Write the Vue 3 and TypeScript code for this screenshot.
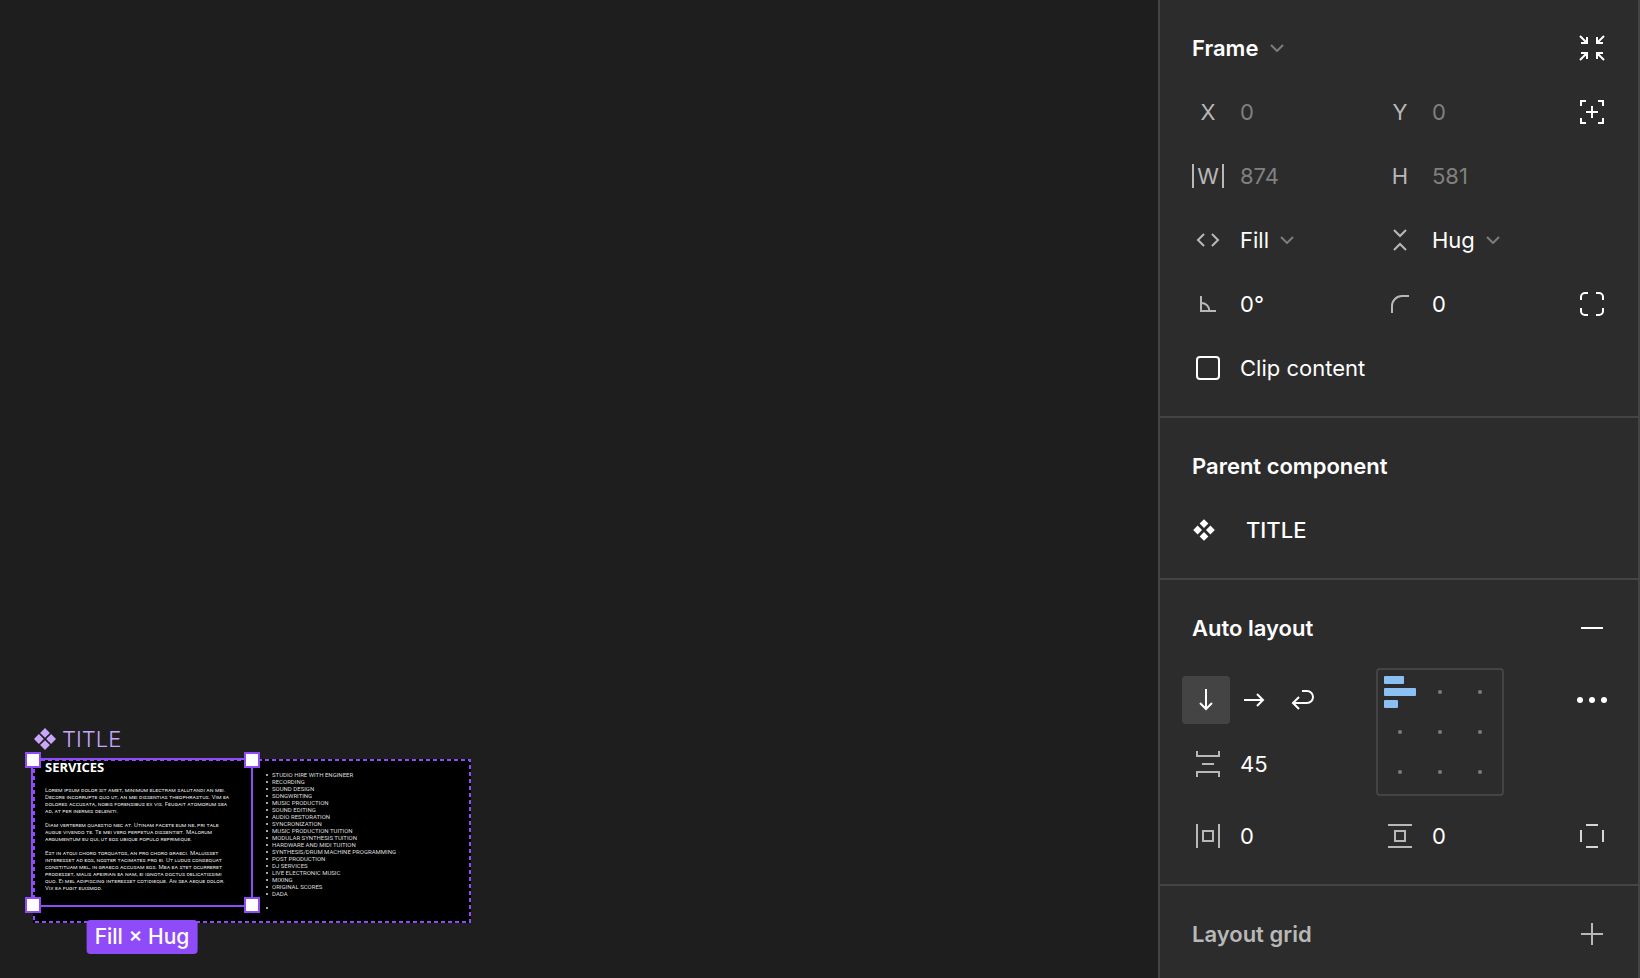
<script setup lang="ts">
import { ref } from 'vue'

type Line = string

const x = ref('0')
const y = ref('0')
const w = ref('874')
const h = ref('581')
const rotation = ref('0°')
const radius = ref('0')
const gap = ref('45')
const padX = ref('0')
const padY = ref('0')
const clip = ref(false)
const direction = ref<'down' | 'right' | 'wrap'>('down')
const alignment = ref(0)

const paragraphs: Line[][] = [
  [
    'Lorem ipsum dolor sit amet, minimum electram salutandi an mei.',
    'Decore incorrupte quo ut, an mei dissentias theophrastus. Vim ea',
    'dolores accusata, nobis forensibus ex vis. Feugait atomorum sea',
    'ad, at per inermis deleniti.',
  ],
  [
    'Diam verterem quaestio nec at. Utinam facete eum ne, pri tale',
    'augue vivendo te. Te mei vero perpetua dissentiet. Malorum',
    'argumentum eu qui, ut eos ubique populo reprimique.',
  ],
  [
    'Est in atqui choro torquatos, an pro choro graeci. Maluisset',
    'interesset ad eos, noster tacimates pro ei. Ut ludus consequat',
    'constituam mel, in graeco accusam eos. Mea ea stet ocurreret',
    'prodesset, malis apeirian ea nam, ei ignota doctus delicatissimi',
    'quo. Ei mel adipiscing interesset cotidieque. An sea aeque dolor.',
    'Vix ea fugit euismod.',
  ],
]

const services: string[] = [
  'STUDIO HIRE WITH ENGINEER',
  'RECORDING',
  'SOUND DESIGN',
  'SONGWRITING',
  'MUSIC PRODUCTION',
  'SOUND EDITING',
  'AUDIO RESTORATION',
  'SYNCRONIZATION',
  'MUSIC PRODUCTION TUITION',
  'MODULAR SYNTHESIS TUITION',
  'HARDWARE AND MIDI TUITION',
  'SYNTHESIS/DRUM MACHINE PROGRAMMING',
  'POST PRODUCTION',
  'DJ SERVICES',
  'LIVE ELECTRONIC MUSIC',
  'MIXING',
  'ORIGINAL SCORES',
  'DADA',
]
</script>

<template>
  <div class="editor">
    <main class="canvas">
      <div class="node">
        <div class="node-label">
          <svg class="diamond" viewBox="0 0 24 24"><path d="M12 1l4.900 4.900-4.900 4.900-4.900-4.900zM12 13.200l4.900 4.900-4.900 4.900-4.900-4.900zM5.900 7.100l4.900 4.900-4.900 4.900L1 12zM18.100 7.100l4.900 4.900-4.900 4.900-4.900-4.900z" /></svg>
          <span>TITLE</span>
        </div>
        <div class="artboard">
          <svg class="outline"><rect x="1" y="1" /></svg>
          <section class="copy">
            <h1>SERVICES</h1>
            <p v-for="(lines, i) in paragraphs" :key="i">
              <span v-for="line in lines" :key="line">{{ line }}</span>
            </p>
          </section>
          <ul class="services">
            <li v-for="s in services" :key="s">{{ s }}</li>
            <li class="last"></li>
          </ul>
          <div class="selection">
            <i class="handle tl"></i><i class="handle tr"></i><i class="handle bl"></i><i class="handle br"></i>
            <span class="badge">Fill × Hug</span>
          </div>
        </div>
      </div>
    </main>

    <aside class="panel">
      <section class="group">
        <header class="head">
          <label class="drop bold">
            <select aria-label="Node type"><option>Frame</option></select>
            <svg class="chev" viewBox="0 0 14 8"><path d="M1 1l6 6 6-6" /></svg>
          </label>
          <button type="button" class="tool" aria-label="Collapse">
            <svg class="ico" viewBox="0 0 32 32"><path d="M11 5v6H5M4 4l7 7M21 5v6h6M28 4l-7 7M11 27v-6H5M4 28l7-7M21 27v-6h6M28 28l-7-7" /></svg>
          </button>
        </header>
        <div class="row">
          <label class="field"><span class="key">X</span><input v-model="x" class="dim" /></label>
          <label class="field"><span class="key">Y</span><input v-model="y" class="dim" /></label>
          <button type="button" class="tool" aria-label="Absolute position">
            <svg class="ico" viewBox="0 0 32 32"><path d="M5 10V5h5M22 5h5v5M27 22v5h-5M10 27H5v-5M16 10v12M10 16h12" /></svg>
          </button>
        </div>
        <div class="row">
          <label class="field"><span class="key"><span class="bars">W</span></span><input v-model="w" class="dim" /></label>
          <label class="field"><span class="key">H</span><input v-model="h" class="dim" /></label>
        </div>
        <div class="row">
          <label class="field drop">
            <span class="key"><svg class="ico" viewBox="0 0 32 32"><path d="M12 10l-6 6 6 6M20 10l6 6-6 6" /></svg></span>
            <select aria-label="Horizontal sizing"><option>Fill</option></select>
            <svg class="chev" viewBox="0 0 14 8"><path d="M1 1l6 6 6-6" /></svg>
          </label>
          <label class="field drop">
            <span class="key"><svg class="ico" viewBox="0 0 32 32"><path d="M10 6l6 6 6-6M10 26l6-6 6 6" /></svg></span>
            <select aria-label="Vertical sizing"><option>Hug</option></select>
            <svg class="chev" viewBox="0 0 14 8"><path d="M1 1l6 6 6-6" /></svg>
          </label>
        </div>
        <div class="row">
          <label class="field">
            <span class="key"><svg class="ico" viewBox="0 0 32 32"><path d="M9 8v15h15M9 15a8 8 0 0 1 8.500 8" /></svg></span>
            <input v-model="rotation" aria-label="Rotation" />
          </label>
          <label class="field">
            <span class="key"><svg class="ico" viewBox="0 0 32 32"><path d="M8 25v-7a10 10 0 0 1 10-10h7" /></svg></span>
            <input v-model="radius" aria-label="Corner radius" />
          </label>
          <button type="button" class="tool" aria-label="Independent corners">
            <svg class="ico" viewBox="0 0 32 32"><path d="M5 12V9a4 4 0 0 1 4-4h3M20 5h3a4 4 0 0 1 4 4v3M27 20v3a4 4 0 0 1-4 4h-3M12 27H9a4 4 0 0 1-4-4v-3" /></svg>
          </button>
        </div>
        <div class="row">
          <label class="field check"><span class="key"><input v-model="clip" type="checkbox" /></span><span>Clip content</span></label>
        </div>
      </section>

      <section class="group">
        <header class="head"><h2>Parent component</h2></header>
        <a class="parent" href="#title">
          <svg class="diamond" viewBox="0 0 24 24"><path d="M12 1.200l4.400 4.400-4.400 4.400-4.400-4.400zM12 14l4.400 4.400-4.400 4.400-4.400-4.400zM5.600 7.600l4.400 4.400-4.400 4.400L1.200 12zM18.400 7.600l4.400 4.400-4.400 4.400-4.400-4.400z" /></svg>
          <span>TITLE</span>
        </a>
      </section>

      <section class="group">
        <header class="head">
          <h2>Auto layout</h2>
          <button type="button" class="tool" aria-label="Remove auto layout">
            <svg class="ico" viewBox="0 0 32 32"><path d="M5 16h22" /></svg>
          </button>
        </header>
        <div class="layout">
          <div class="left">
            <div class="dirs">
              <button type="button" aria-label="Vertical" :class="{ on: direction === 'down' }" @click="direction = 'down'">
                <svg class="ico" viewBox="0 0 32 32"><path d="M16 5v20M10 19l6 6 6-6" /></svg>
              </button>
              <button type="button" aria-label="Horizontal" :class="{ on: direction === 'right' }" @click="direction = 'right'">
                <svg class="ico" viewBox="0 0 32 32"><path d="M6 16h19M19 10l6 6-6 6" /></svg>
              </button>
              <button type="button" aria-label="Wrap" :class="{ on: direction === 'wrap' }" @click="direction = 'wrap'">
                <svg class="ico" viewBox="0 0 32 32"><path d="M16 7h5a6 6 0 0 1 0 12H7M13 13l-6 6 6 6" /></svg>
              </button>
            </div>
            <label class="field">
              <span class="key"><svg class="ico" viewBox="0 0 32 32"><path d="M5 3v5h22V3M10 16h12M5 29v-5h22v5" /></svg></span>
              <input v-model="gap" aria-label="Gap" />
            </label>
          </div>
          <div class="align-wrap">
            <div class="align" role="radiogroup" aria-label="Alignment">
              <label v-for="n in 9" :key="n" :class="{ picked: alignment === n - 1 }">
                <input v-model="alignment" type="radio" name="alignment" :value="n - 1" :aria-label="`Alignment ${n}`" />
                <template v-if="alignment === n - 1"><i class="b1"></i><i class="b2"></i><i class="b3"></i></template>
              </label>
            </div>
          </div>
          <button type="button" class="tool" aria-label="More">
            <svg class="ico solid" viewBox="0 0 32 32"><circle cx="4" cy="16" r="3" /><circle cx="16" cy="16" r="3" /><circle cx="28" cy="16" r="3" /></svg>
          </button>
        </div>
        <div class="row">
          <label class="field">
            <span class="key"><svg class="ico" viewBox="0 0 32 32"><path d="M5 4v24M27 4v24M11 11h10v10H11z" /></svg></span>
            <input v-model="padX" aria-label="Horizontal padding" />
          </label>
          <label class="field">
            <span class="key"><svg class="ico" viewBox="0 0 32 32"><path d="M4 5h24M4 27h24M11 11h10v10H11z" /></svg></span>
            <input v-model="padY" aria-label="Vertical padding" />
          </label>
          <button type="button" class="tool soft" aria-label="Individual padding">
            <svg class="ico" viewBox="0 0 32 32"><path d="M10 5h12M10 27h12M5 10v12M27 10v12" /></svg>
          </button>
        </div>
      </section>

      <section class="group">
        <header class="head muted">
          <h2>Layout grid</h2>
          <button type="button" class="tool" aria-label="Add layout grid">
            <svg class="ico" viewBox="0 0 32 32"><path d="M5 16h22M16 5v22" /></svg>
          </button>
        </header>
      </section>
    </aside>
  </div>
</template>

<style>
body {
  margin: 0;
  background: #1e1e1e;
}
</style>

<style scoped>
* {
  box-sizing: border-box;
}
.editor {
  display: flex;
  height: 100vh;
  overflow: hidden;
  background: #1e1e1e;
  color: #fff;
  font: 400 22px/32px Inter, "Liberation Sans", sans-serif;
}
.canvas {
  position: relative;
  flex: 1;
  min-width: 0;
  overflow: hidden;
}
svg {
  display: block;
  flex: none;
}
button,
input,
select {
  margin: 0;
  padding: 0;
  border: 0;
  background: none;
  color: inherit;
  font: inherit;
  appearance: none;
}

/* canvas */
.node {
  position: absolute;
  left: 33px;
  top: 723px;
}
.node-label {
  display: flex;
  align-items: center;
  gap: 5px;
  height: 32px;
  color: #c9a6fa;
  font-weight: 300;
}
.diamond {
  width: 24px;
  height: 24px;
  fill: currentColor;
}
.artboard {
  position: relative;
  display: flex;
  width: 438px;
  height: 164px;
  margin-top: 4px;
  background: #000;
}
.outline {
  position: absolute;
  inset: 0;
  width: 100%;
  height: 100%;
}
.outline rect {
  width: calc(100% - 2px);
  height: calc(100% - 2px);
  fill: none;
  stroke: #8f4bf7;
  stroke-width: 2;
  stroke-dasharray: 4 3;
}
.copy {
  width: 222px;
  padding: 0 0 0 12px;
  font: 400 6px/7px Roboto, Arial, sans-serif;
  font-variant: small-caps;
  color: #ddd;
  white-space: nowrap;
}
.copy h1 {
  margin: 0 0 11px;
  color: #fff;
  font: 700 13px/16px "Noto Sans", sans-serif;
}
.copy p {
  margin: 0 0 7px;
}
.copy p span {
  display: block;
}
.services {
  margin: 0;
  padding: 12px 0 0 17px;
  list-style: none;
  font: 400 6px/7px Roboto, Arial, sans-serif;
  color: #ddd;
  white-space: nowrap;
}
.services li {
  height: 7px;
  display: flex;
  align-items: center;
}
.services li::before {
  content: "";
  width: 2px;
  height: 2px;
  margin: 0 4px 0 -6px;
  border-radius: 1px;
  background: #ddd;
}
.services .last {
  margin-top: 7px;
}
.selection {
  position: absolute;
  left: -2px;
  top: -1px;
  width: 222px;
  height: 149px;
  border: 2px solid #8f4bf7;
}
.handle {
  position: absolute;
  width: 16px;
  height: 16px;
  border: 2px solid #8f4bf7;
  background: #fff;
}
.tl {
  left: -8px;
  top: -8px;
}
.tr {
  right: -9px;
  top: -8px;
}
.bl {
  left: -8px;
  bottom: -8px;
}
.br {
  right: -9px;
  bottom: -8px;
}
.badge {
  position: absolute;
  left: 50%;
  top: 160px;
  transform: translateX(-50%);
  padding: 1px 8px;
  border-radius: 4px;
  background: #8f4bf7;
  font-size: 21px;
  font-weight: 500;
  white-space: nowrap;
}

/* inspector */
.panel {
  flex: none;
  width: 482px;
  border: solid #444;
  border-width: 0 2px;
  background: #2c2c2c;
}
.group {
  padding: 16px 20px 16px 22px;
}
.group + .group {
  border-top: 2px solid #444;
}
.head {
  display: flex;
  align-items: center;
  justify-content: space-between;
  height: 64px;
  padding-left: 10px;
}
h2,
.bold {
  margin: 0;
  font-size: 22px;
  font-weight: 600;
}
.muted {
  color: #b8b8b8;
}
.row {
  display: grid;
  grid-template-columns: minmax(0, 1fr) minmax(0, 1fr) 52px;
  align-items: center;
  height: 64px;
}
.field {
  display: flex;
  align-items: center;
  height: 64px;
  min-width: 0;
}
.field > input {
  flex: 1;
  min-width: 0;
  height: 32px;
}
.key {
  display: flex;
  justify-content: center;
  flex: none;
  width: 52px;
  margin-right: 6px;
  color: #b8b8b8;
}
.bars {
  width: 32px;
  height: 24px;
  border: solid #b8b8b8;
  border-width: 0 2px;
  line-height: 24px;
  text-align: center;
}
.dim {
  color: #808080;
}
.check {
  white-space: nowrap;
}
.check input {
  width: 24px;
  height: 24px;
  border: 2px solid #fff;
  border-radius: 4px;
}
.check input:checked {
  background: #fff;
}
.drop {
  display: flex;
  align-items: center;
}
.chev {
  width: 14px;
  height: 8px;
  margin-left: 11px;
  fill: none;
  stroke: #7c7c7c;
  stroke-width: 2;
  pointer-events: none;
}
.tool {
  display: flex;
  align-items: center;
  justify-content: center;
  width: 52px;
  height: 48px;
}
.soft {
  color: #d6d6d6;
}
.ico {
  width: 32px;
  height: 32px;
  fill: none;
  stroke: currentColor;
  stroke-width: 2;
}
.solid {
  overflow: visible;
  fill: currentColor;
  stroke: none;
}
.parent {
  display: flex;
  align-items: center;
  gap: 30px;
  height: 64px;
  padding-left: 10px;
  color: inherit;
  font-weight: 500;
  text-decoration: none;
}
.layout {
  display: grid;
  grid-template-columns: minmax(0, 1fr) minmax(0, 1fr) 52px;
  margin: 8px 0;
}
.layout > .tool {
  height: 64px;
}
.dirs {
  display: flex;
  align-items: center;
  height: 64px;
}
.dirs button {
  display: flex;
  align-items: center;
  justify-content: center;
  width: 48px;
  height: 48px;
  border-radius: 4px;
}
.dirs .on {
  background: #444;
}
.align-wrap {
  padding: 0 2px;
}
.align {
  display: grid;
  grid-template-columns: repeat(3, 40px);
  width: 128px;
  height: 128px;
  padding: 2px;
  border: 2px solid #444;
  border-radius: 4px;
}
.align label {
  display: flex;
  align-items: center;
  justify-content: center;
  height: 40px;
}
.align input {
  width: 4px;
  height: 4px;
  border-radius: 2px;
  background: #7c7c7c;
}
.align .picked {
  flex-direction: column;
  align-items: flex-start;
  gap: 4px;
  padding-left: 4px;
}
.picked input {
  display: none;
}
.picked i {
  height: 8px;
  border-radius: 1px;
  background: #8cc0f3;
}
.picked .b1 {
  width: 20px;
}
.picked .b2 {
  width: 32px;
}
.picked .b3 {
  width: 14px;
}
</style>
